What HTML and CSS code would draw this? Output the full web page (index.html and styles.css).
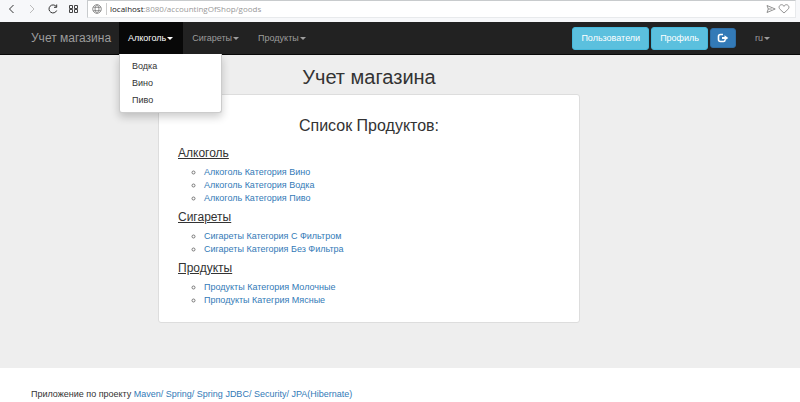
FILE: index.html
```
<!DOCTYPE html>
<html lang="ru">
<head>
<meta charset="utf-8">
<title>Учет магазина</title>
<link rel="stylesheet" href="styles.css">
</head>
<body>
<div class="browser">
  <div class="tools">
    <button class="tool" aria-label="Назад"><svg width="12" height="12" viewBox="0 0 12 12"><path d="M7.500 2 3.500 6l4 4" stroke="#333"/></svg></button>
    <button class="tool" aria-label="Вперед"><svg width="12" height="12" viewBox="0 0 12 12"><path d="m3 2 4 4-4 4" stroke="#bbb"/></svg></button>
    <button class="tool" aria-label="Обновить"><svg width="12" height="12" viewBox="0 0 12 12"><path d="M8.700 7.500A4 4 0 1 1 8.200 3.500M8.700 1.500v2.800H6" stroke="#333"/></svg></button>
    <button class="tool" aria-label="Экспресс-панель"><svg width="12" height="12" viewBox="0 0 12 12"><path d="M.5 2.500h3v3h-3zM5.500 2.500h3v3h-3zM.5 6.500h3v3h-3zM5.500 6.500h3v3h-3z" stroke="#444"/></svg></button>
  </div>
  <div class="address">
    <svg class="globe" width="10" height="10" viewBox="0 0 10 10"><path d="M5 .7a4.300 4.300 0 1 0 0 8.600A4.300 4.300 0 1 0 5 .7zM5 .7c-2.600 2.600-2.600 6 0 8.600M5 .7c2.600 2.600 2.600 6 0 8.600M1.200 3.300h7.600M1.200 6.700h7.600" stroke="#777" stroke-width=".8"/></svg>
    <span class="url"><span class="host">localhost</span>:8080/accountingOfShop/goods</span>
    <button class="tool" aria-label="Отправить"><svg width="10" height="10" viewBox="0 0 10 10"><path d="M1 1.500 9.200 5 1 8.500 2.300 5zM2.300 5h3.500" stroke="#777" stroke-width=".8"/></svg></button>
    <button class="tool" aria-label="В закладки"><svg width="12" height="10" viewBox="0 0 12 10"><path d="M6 9 2.200 5.500C-.2 3.200 1.700.7 3.600.7 5 .7 5.700 1.600 6 2.400 6.300 1.600 7 .7 8.400.7c1.900 0 3.800 2.500 1.400 4.800z" stroke="#777" stroke-width=".8"/></svg></button>
  </div>
</div>

<nav class="navbar">
  <a class="brand" href="#">Учет магазина</a>
  <ul class="menu">
    <li class="entry">
      <a class="link active" href="#">Алкоголь<span class="caret"></span></a>
      <ul class="dropdown">
        <li><a href="#">Водка</a></li>
        <li><a href="#">Вино</a></li>
        <li><a href="#">Пиво</a></li>
      </ul>
    </li>
    <li class="entry"><a class="link" href="#">Сигареты<span class="caret"></span></a></li>
    <li class="entry"><a class="link" href="#">Продукты<span class="caret"></span></a></li>
  </ul>
  <div class="actions">
    <button class="btn info">Пользователи</button>
    <button class="btn info">Профиль</button>
    <button class="btn exit" aria-label="Выйти"><svg width="12" height="10" viewBox="0 0 12 10"><path d="M6 1.500H3.500Q1.500 1.500 1.500 3.500v3q0 2 2 2h3q1.500 0 1.500-1.500" stroke="#fff" stroke-width="1.600"/><path d="M7.500 2.200 11.300 5l-3.800 2.800V6H5V4h2.500z" fill="#fff"/></svg></button>
  </div>
  <a class="link" href="#">ru<span class="caret"></span></a>
</nav>

<main class="content">
  <h1>Учет магазина</h1>
  <section class="panel">
    <h2>Список Продуктов:</h2>
    <h3>Алкоголь</h3>
    <ul class="goods">
      <li><a href="#">Алкоголь Категория Вино</a></li>
      <li><a href="#">Алкоголь Категория Водка</a></li>
      <li><a href="#">Алкоголь Категория Пиво</a></li>
    </ul>
    <h3>Сигареты</h3>
    <ul class="goods">
      <li><a href="#">Сигареты Категория С Фильтром</a></li>
      <li><a href="#">Сигареты Категория Без Фильтра</a></li>
    </ul>
    <h3>Продукты</h3>
    <ul class="goods">
      <li><a href="#">Продукты Категория Молочные</a></li>
      <li><a href="#">Прподукты Категрия Мясные</a></li>
    </ul>
  </section>
</main>

<footer class="footer">Приложение по проекту <a href="#">Maven/ Spring/ Spring JDBC/ Security/ JPA(Hibernate)</a></footer>
</body>
</html>
```
FILE: styles.css
```
* { box-sizing: border-box; }
body {
  margin: 0;
  background: #fff;
  color: #333;
  font: 9px/13px "Liberation Sans", Arial, sans-serif;
}
a { color: #337ab7; text-decoration: none; }
ul { margin: 0; padding: 0; list-style: none; }
button { font: inherit; cursor: pointer; }
svg { display: block; fill: none; }

.browser {
  display: flex;
  height: 22px;
  padding: 0 4px 4px 6px;
  background: #f7f8fa;
}
.tools { display: flex; align-items: center; gap: 9px; width: 81px; }
.tool { padding: 0; border: 0; background: none; }
.address {
  flex: 1;
  display: flex;
  align-items: center;
  gap: 2px;
  padding: 0 5px 0 4px;
  border: 1px solid #c8cbcd;
  border-right-color: #e8eaec;
  border-bottom-color: #e8eaec;
  background: #fff;
}
.url {
  flex: 1;
  margin-left: 2px;
  padding-left: 3px;
  border-left: 1px solid #ccc;
  color: #999;
  font: 8px/12px "Open Sans", sans-serif;
}
.host { color: #222; }

.navbar {
  display: flex;
  align-items: center;
  height: 33px;
  padding: 0 20px 0 31px;
  border-bottom: 1px solid #080808;
  background: #222;
}
.brand { width: 88px; color: #9d9d9d; font-size: 12px; white-space: nowrap; }
.menu { display: flex; flex: 1; }
.entry { position: relative; }
.link {
  display: flex;
  align-items: center;
  gap: 1px;
  padding: 0 10px 0 9px;
  color: #9d9d9d;
  line-height: 32px;
}
.active { background: #080808; color: #fff; }
.caret {
  border: 3px solid transparent;
  border-top-color: currentColor;
  border-bottom: 0;
}
.dropdown {
  position: absolute;
  top: 100%;
  left: 0;
  z-index: 1;
  width: 103px;
  padding: 4px 0 3px;
  border: 1px solid #ccc;
  border-top: 0;
  border-radius: 0 0 3px 3px;
  background: #fff;
  box-shadow: 0 4px 8px rgba(0, 0, 0, .2);
}
.dropdown a { display: block; padding: 0 12px; color: #333; line-height: 17px; }
.actions { display: flex; align-items: center; gap: 2px; margin-right: 10px; }
.btn {
  padding: 4px 8px;
  border: 1px solid #46b8da;
  border-radius: 3px;
  background: #5bc0de;
  color: #fff;
}
.exit { padding: 4px 6px; border-color: #2e6da4; background: #337ab7; }

.content { padding: 10px 62px 45px 0; background: #eee; }
h1, h2, h3 { margin: 0; font-weight: 400; }
h1 { margin-bottom: 5px; font-size: 20px; line-height: 24px; text-align: center; }
.panel {
  max-width: 422px;
  margin: 0 auto;
  padding: 22px 19px 15px;
  border: 1px solid #ddd;
  border-radius: 3px;
  background: #fff;
}
h2 { margin-bottom: 12px; font-size: 16px; line-height: 18px; text-align: center; }
h3 { margin: 6px 0; font-size: 12px; line-height: 13px; text-decoration: underline; }
.goods { padding-left: 26px; list-style: circle; }
.goods li::marker { color: #777; }
.footer { padding: 20px 31px 0; }
```
